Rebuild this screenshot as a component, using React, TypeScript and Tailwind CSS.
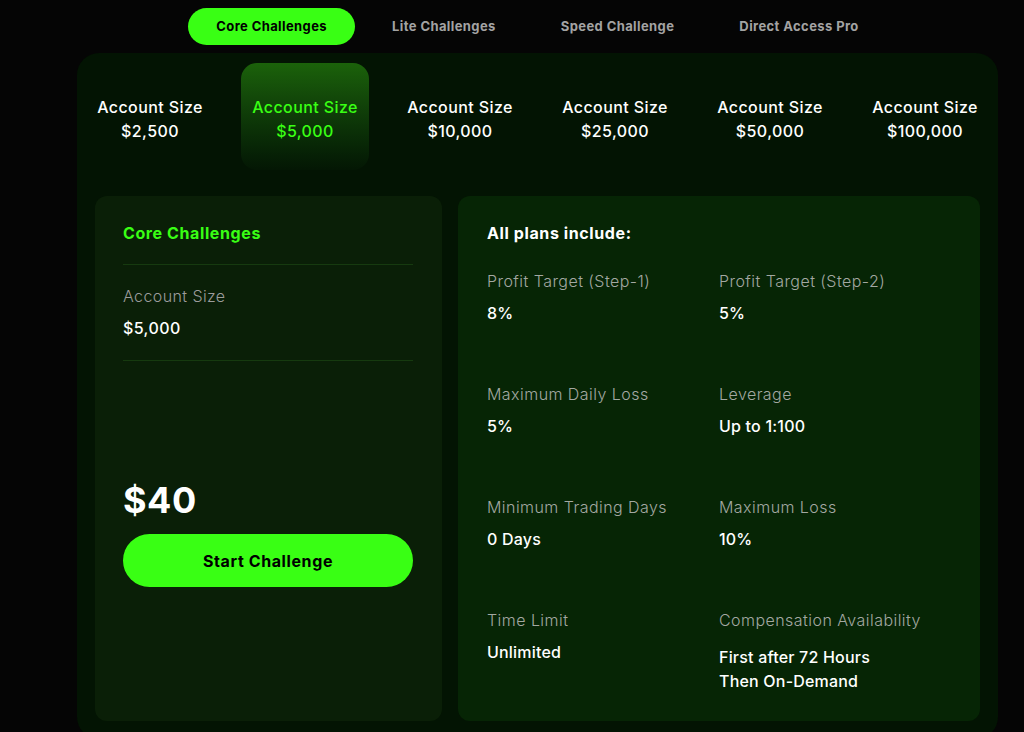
import React, { useState } from 'react';

const tabs = ['Core Challenges', 'Lite Challenges', 'Speed Challenge', 'Direct Access Pro'];
const sizes = ['$2,500', '$5,000', '$10,000', '$25,000', '$50,000', '$100,000'];

const features = [
  { label: 'Profit Target (Step-1)', value: ['8%'] },
  { label: 'Profit Target (Step-2)', value: ['5%'] },
  { label: 'Maximum Daily Loss', value: ['5%'] },
  { label: 'Leverage', value: ['Up to 1:100'] },
  { label: 'Minimum Trading Days', value: ['0 Days'] },
  { label: 'Maximum Loss', value: ['10%'] },
  { label: 'Time Limit', value: ['Unlimited'] },
  { label: 'Compensation Availability', value: ['First after 72 Hours', 'Then On-Demand'] },
];

export default function App() {
  const [activeTab, setActiveTab] = useState(0);
  const [activeSize, setActiveSize] = useState(1);

  return (
    <div className="min-h-screen bg-[#050505] pt-2 pl-[77px] pr-[26px] font-['Inter',sans-serif] tracking-[0.4px]">
      {/* Challenge type tabs */}
      <div className="flex justify-center gap-[9px]">
        {tabs.map((t, i) => (
          <button
            key={t}
            onClick={() => setActiveTab(i)}
            className={
              i === activeTab
                ? 'h-[37px] rounded-full bg-[#39ff14] px-7 text-[13px] font-bold tracking-[0.4px] text-black'
                : 'h-[37px] rounded-full px-7 text-[13px] font-bold tracking-[0.4px] text-[#a3a3a3]'
            }
          >
            {t}
          </button>
        ))}
      </div>

      {/* Main panel */}
      <div className="mt-2 rounded-[22px] bg-[#031403] pb-[18px] pt-[10px]">
        {/* Account sizes */}
        <div className="flex justify-between px-[9px]">
          {sizes.map((s, i) => (
            <button
              key={s}
              onClick={() => setActiveSize(i)}
              className={
                i === activeSize
                  ? 'flex h-[107px] w-[128px] flex-col items-center rounded-[16px] bg-gradient-to-b from-[#1b620a] to-[#041704] pt-[32px] text-[16px] font-medium leading-6 tracking-[0.4px] text-[#39ff14]'
                  : 'flex h-[107px] w-[128px] flex-col items-center pt-[32px] text-[16px] font-medium leading-6 tracking-[0.4px] text-white'
              }
            >
              <span className="whitespace-nowrap">Account Size</span>
              <span>{s}</span>
            </button>
          ))}
        </div>

        {/* Cards */}
        <div className="mt-[26px] flex gap-4 px-[18px]">
          <div className="flex h-[525px] w-[347px] flex-col rounded-[12px] bg-[#0a1f07] pl-7 pr-[29px] pt-[27px]">
            <h3 className="text-[16px] font-bold leading-5 tracking-[0.6px] text-[#39ff14]">Core Challenges</h3>
            <div className="mt-[21px] h-px bg-[#163a0f]" />
            <p className="mt-[19px] text-[16px] font-light leading-6 text-[#9c9c9c]">Account Size</p>
            <p className="mt-2 text-[16px] font-medium leading-6 text-white">{sizes[activeSize]}</p>
            <div className="mt-5 h-px bg-[#163a0f]" />
            <p className="mt-[119px] text-[36px] font-bold leading-10 tracking-[0.5px] text-white">$40</p>
            <button className="mt-[14px] h-[53px] w-full rounded-full bg-[#39ff14] text-[16px] font-bold tracking-[0.6px] text-black">
              Start Challenge
            </button>
          </div>

          <div className="flex-1 rounded-[12px] bg-[#062505] pl-[29px] pt-[27px]">
            <h3 className="text-[16px] font-bold leading-5 tracking-[0.6px] text-white">All plans include:</h3>
            <div className="mt-[26px] grid grid-cols-[232px_1fr] gap-y-[57px]">
              {features.map((f) => (
                <div key={f.label}>
                  <p className="whitespace-nowrap text-[16px] font-light leading-6 tracking-[0.45px] text-[#a3a8a2]">{f.label}</p>
                  <div className={f.value.length > 1 ? 'mt-[13px]' : 'mt-2'}>
                    {f.value.map((v) => (
                      <p key={v} className="text-[16px] font-medium leading-6 tracking-[0.2px] text-white">
                        {v}
                      </p>
                    ))}
                  </div>
                </div>
              ))}
            </div>
          </div>
        </div>
      </div>
    </div>
  );
}
